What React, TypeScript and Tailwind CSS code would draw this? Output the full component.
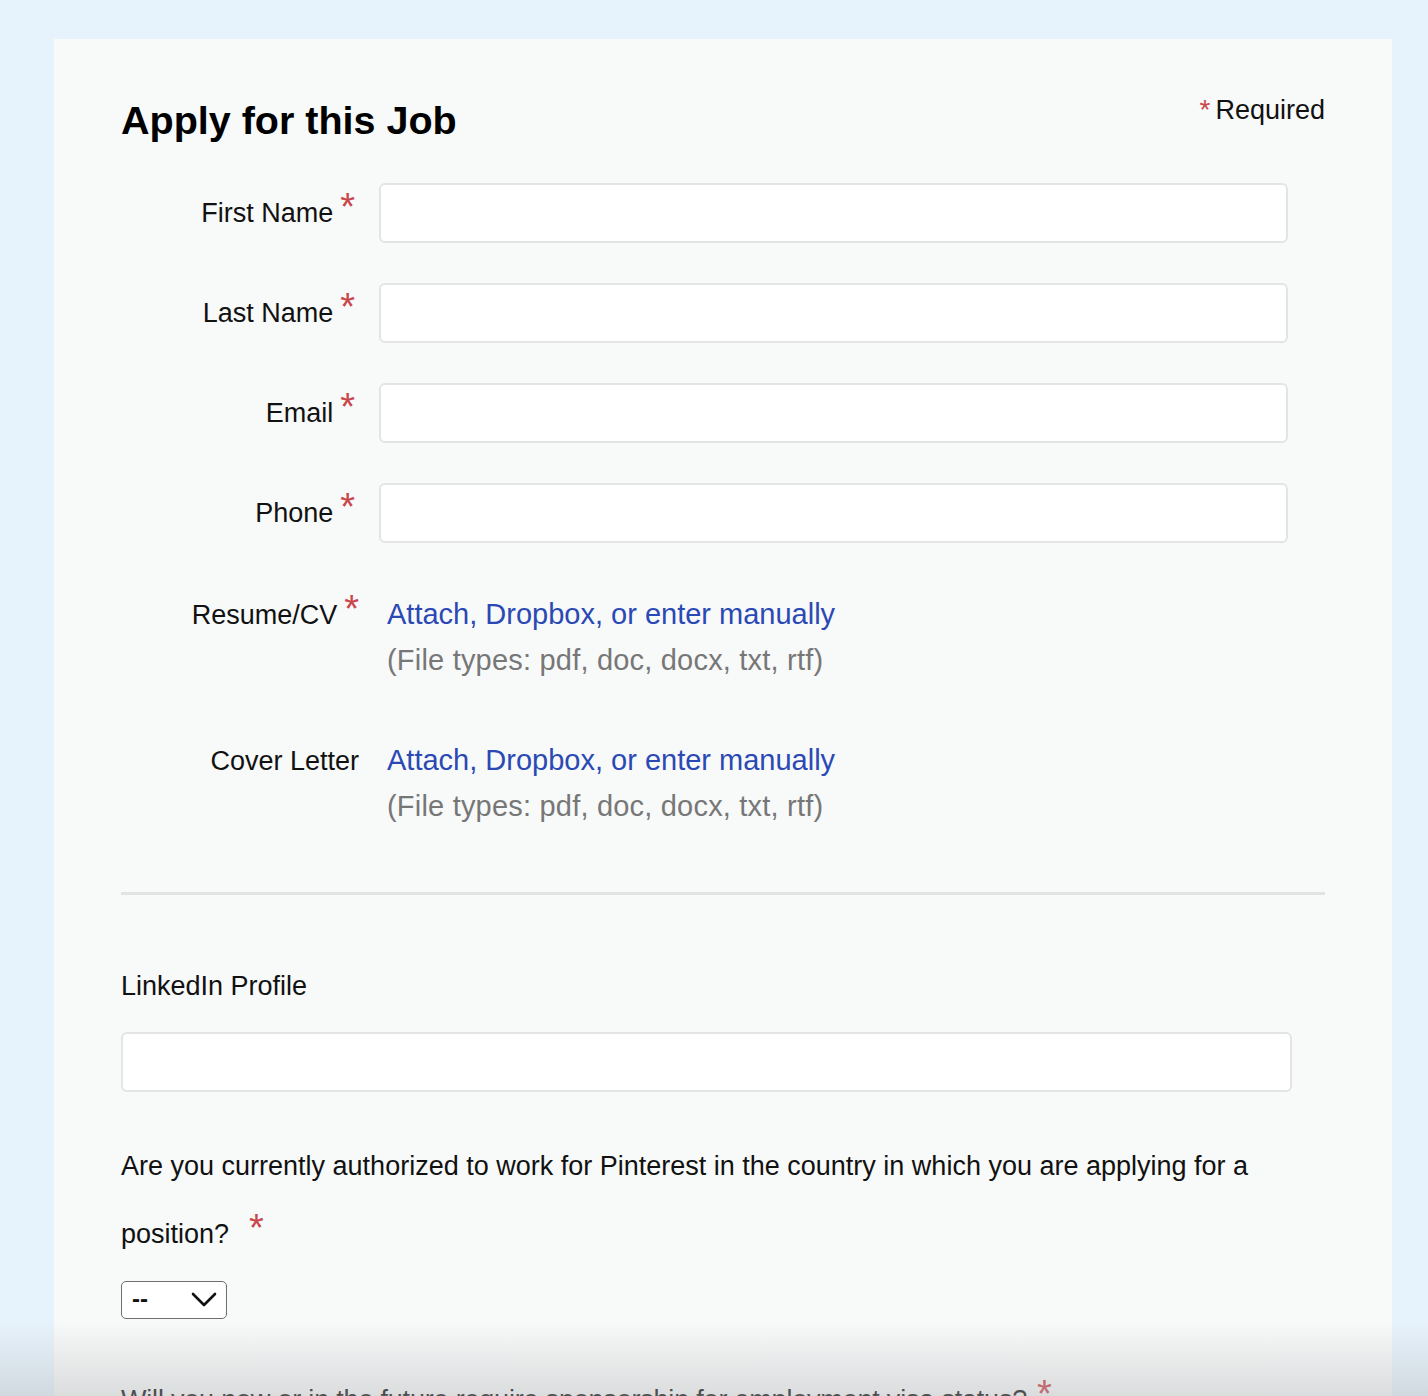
import React from "react";

const Star = ({ className = "" }: { className?: string }) => (
  <span className={`text-[#c9474b] text-[38px] leading-[0] relative ${className}`}>*</span>
);

function InputRow({ label }: { label: string }) {
  return (
    <div className="flex items-center">
      <label className="w-[238px] pr-[4px] text-right text-[27px] leading-[30px] text-[#111]">
        {label}
        <Star className="ml-[7px] -top-[2px]" />
      </label>
      <input
        type="text"
        className="ml-[20px] w-[909px] h-[60px] bg-white border-2 border-[#e3e4e4] rounded-[6px] outline-none"
      />
    </div>
  );
}

function FileRow({ label, required }: { label: string; required?: boolean }) {
  return (
    <div className="flex items-baseline">
      <label className="w-[238px] text-right text-[27px] leading-[30px] text-[#111]">
        {label}
        {required && <Star className="ml-[7px] -top-[2px]" />}
      </label>
      <div className="ml-[28px] text-[29px] leading-[46px]">
        <a href="#" className="block text-[#2a49b4]">
          Attach, Dropbox, or enter manually
        </a>
        <div className="text-[#777] tracking-[0.2px]">(File types: pdf, doc, docx, txt, rtf)</div>
      </div>
    </div>
  );
}

export default function App() {
  return (
    <div className="relative h-[1396px] overflow-hidden bg-[#e7f3fc] font-['Liberation_Sans',Arial,sans-serif] text-[#111]">
      <div className="ml-[54px] mt-[39px] w-[1338px] min-h-[1400px] bg-[#f8f9f9] px-[67px] pt-[58px]">
        <div className="flex justify-between items-start">
          <h1 className="text-[39.5px] leading-[46px] font-bold text-black">Apply for this Job</h1>
          <div className="text-[27px] leading-[30px] -mt-[2px]">
            <span className="text-[#c9474b] text-[28px] leading-[0] mr-[5px]">*</span>
            Required
          </div>
        </div>

        <div className="mt-[40px] flex flex-col gap-[40px]">
          <InputRow label="First Name" />
          <InputRow label="Last Name" />
          <InputRow label="Email" />
          <InputRow label="Phone" />
        </div>

        <div className="mt-[48px]">
          <FileRow label="Resume/CV" required />
        </div>
        <div className="mt-[54px]">
          <FileRow label="Cover Letter" />
        </div>

        <div className="mt-[63px] h-[3px] bg-[#e2e3e3]" />

        <div className="mt-[76px] text-[27px] leading-[30px]">LinkedIn Profile</div>
        <input
          type="text"
          className="mt-[31px] block w-[1171px] h-[60px] bg-white border-2 border-[#e3e4e4] rounded-[6px] outline-none"
        />

        <div className="mt-[40px] text-[27px] leading-[68px]">
          Are you currently authorized to work for Pinterest in the country in which you are applying for a
          <br />
          position?
          <Star className="ml-[20px] -top-[2px]" />
        </div>

        <div className="mt-[13px] flex items-center justify-between w-[106px] h-[38px] border-[1.5px] border-[#6f6f6f] rounded-[5px] bg-white pl-[10px] pr-[9px]">
          <span className="text-[24px] font-bold leading-none -mt-[2px]">--</span>
          <svg width="26" height="16" viewBox="0 0 26 16" fill="none">
            <polyline points="2,2 13,13 24,2" stroke="#111" strokeWidth="2.6" strokeLinecap="round" strokeLinejoin="round" />
          </svg>
        </div>

        <div className="mt-[47px] text-[27px] leading-[68px] tracking-[-0.2px]">
          Will you now or in the future require sponsorship for employment visa status?
          <Star className="ml-[10px] -top-[2px]" />
        </div>
      </div>

      <div className="absolute left-0 right-0 bottom-0 h-[76px] bg-gradient-to-b from-transparent to-[rgba(175,178,180,0.4)] pointer-events-none" />
    </div>
  );
}
